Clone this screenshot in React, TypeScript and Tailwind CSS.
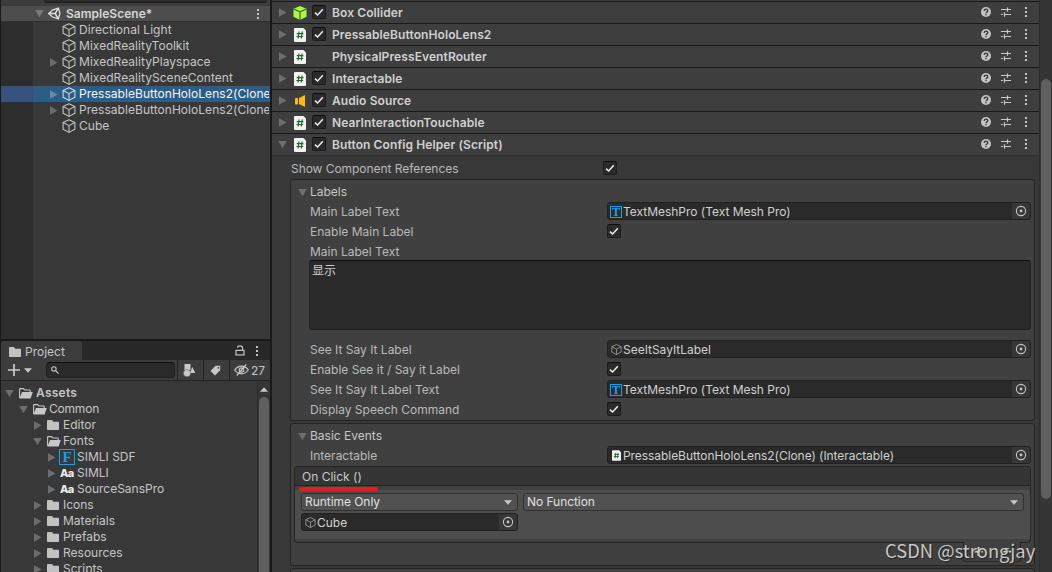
import React from "react";

const ui = "font-['Inter','Noto_Sans_CJK_SC',sans-serif]";

function Tri({ open = false, className = "" }: { open?: boolean; className?: string }) {
  return (
    <svg width="9" height="9" viewBox="0 0 9 9" className={`shrink-0 ${className}`}>
      <path d={open ? "M0.3 1h8.4L4.5 8.3z" : "M1 0.3v8.4L8.5 4.5z"} fill="currentColor" />
    </svg>
  );
}

function CubeIcon({ size = 14 }: { size?: number }) {
  return (
    <svg width={size} height={size} viewBox="0 0 14 14" className="shrink-0" fill="none" stroke="currentColor" strokeWidth="1.05" strokeLinejoin="round">
      <path d="M7 0.7L12.9 3.5V10.3L7 13.4L1.1 10.3V3.5Z" />
      <path d="M1.1 3.5L7 6.6L12.9 3.5M7 6.6V13.4" />
    </svg>
  );
}

function UnityIcon() {
  return (
    <svg width="13" height="13" viewBox="0 0 13 13" className="shrink-0" fill="none" stroke="#dedede" strokeWidth="1.3">
      <path d="M4.2 3.2L10.4 1.2L11.9 6.5L10.4 11.8L4.2 9.8L0.8 6.5Z" />
      <path d="M1.2 6.5H7.2M7.2 6.5L10.2 1.4M7.2 6.5L10.2 11.6" strokeWidth="1.5" />
    </svg>
  );
}

function Dots() {
  return (
    <svg width="3" height="11" viewBox="0 0 3 11" className="shrink-0" fill="#c4c4c4">
      <rect x="0" y="1" width="2" height="2" />
      <rect x="0" y="5" width="2" height="2" />
      <rect x="0" y="9" width="2" height="2" />
    </svg>
  );
}

function Script({ small = false }: { small?: boolean }) {
  return (
    <svg width={small ? 9 : 12} height={small ? 11 : 14} viewBox="0 0 12 14" className="shrink-0">
      <path d="M1 0H9.5L12 2.5V13a1 1 0 0 1-1 1H1a1 1 0 0 1-1-1V1a1 1 0 0 1 1-1z" fill="#f2f2f2" />
      <path d="M5 3.5L4.1 10.5M8.2 3.5L7.3 10.5M2.7 5.6H9.4M2.4 8.5H9.1" stroke="#22652c" strokeWidth="1.2" fill="none" />
    </svg>
  );
}

function BoxCollider() {
  return (
    <svg width="14" height="14" viewBox="0 0 14 14" className="shrink-0">
      <path d="M7 0L13.5 2.8V10.8L7 14L0.5 10.8V2.8Z" fill="#a9f54b" />
      <path d="M0.7 3L7 6L13.3 3M7 6V14" stroke="#385c16" strokeWidth="1.1" fill="none" />
    </svg>
  );
}

function Audio() {
  return (
    <svg width="12" height="14" viewBox="0 0 12 14" className="shrink-0" fill="#ffbb0c">
      <rect x="1" y="4" width="3" height="6.5" rx="0.8" />
      <path d="M5 4L11 1V13L5 10Z" />
    </svg>
  );
}

function Check() {
  return (
    <span className="flex h-[14px] w-[14px] shrink-0 items-center justify-center rounded-[2px] border border-[#1c1c1c] border-t-[#0d0d0d] bg-[#2a2a2a]">
      <svg width="10" height="9" viewBox="0 0 10 9" fill="none" stroke="#ececec" strokeWidth="1.5">
        <path d="M1 4.6L3.6 7L8.8 1.3" />
      </svg>
    </span>
  );
}

function Folder({ open = false }: { open?: boolean }) {
  return open ? (
    <svg width="14" height="11" viewBox="0 0 14 11" className="shrink-0">
      <path d="M0.6 10V1.2Q0.6 0.6 1.2 0.6H4.6L5.8 2H10.6Q11.2 2 11.2 2.7V4" fill="none" stroke="#c8c8c8" strokeWidth="1.1" />
      <path d="M3 4H13.8L11.6 10.5H0.5Z" fill="#c8c8c8" />
    </svg>
  ) : (
    <svg width="12" height="10" viewBox="0 0 12 10" className="shrink-0">
      <path d="M0.7 0H5L6.2 1.7H11.3Q12 1.7 12 2.4V9.3Q12 10 11.3 10H0.7Q0 10 0 9.3V0.7Q0 0 0.7 0Z" fill="#c2c2c2" />
    </svg>
  );
}

function Down() {
  return (
    <svg width="8" height="5" viewBox="0 0 8 5" className="shrink-0">
      <path d="M0 0.3H8L4 4.7Z" fill="#c8c8c8" />
    </svg>
  );
}

function Letter({ ch, small = false }: { ch: string; small?: boolean }) {
  return (
    <span
      className={
        small
          ? "flex h-[12px] w-[12px] shrink-0 items-center justify-center border border-[#12a2e6] font-['Liberation_Serif',serif] text-[12px] leading-none font-bold tracking-normal text-[#12a2e6]"
          : "flex h-4 w-4 shrink-0 items-center justify-center border border-[#12a2e6] font-['Liberation_Serif',serif] text-[15px] leading-none font-bold tracking-normal text-[#12a2e6]"
      }
    >
      {ch}
    </span>
  );
}

const hierarchy = [
  { name: "Directional Light" },
  { name: "MixedRealityToolkit" },
  { name: "MixedRealityPlayspace", arrow: true },
  { name: "MixedRealitySceneContent" },
  { name: "PressableButtonHoloLens2(Clone)", arrow: true, selected: true },
  { name: "PressableButtonHoloLens2(Clone)", arrow: true },
  { name: "Cube" },
];

function Hierarchy() {
  return (
    <section className="flex h-[339px] flex-col overflow-hidden bg-[#383838]">
      <div className="flex h-[6px] shrink-0 bg-[#3c3c3c] pr-[3px] pl-[43px]">
        <div className="h-[3px] flex-1 rounded-b-[3px] border-b border-[#1c1c1c] bg-[#2a2a2a]" />
      </div>
      <div className="flex h-4 shrink-0 items-center border-b border-[#303030] bg-[#4d4d4d] pr-[10px] pl-[34px]">
        <Tri open className="text-[#7c7c7c]" />
        <span className="ml-[4px] flex"><UnityIcon /></span>
        <span className="ml-[5px] text-[12px] font-semibold tracking-[0.02px] text-[#d6d6d6]">SampleScene*</span>
        <span className="ml-auto flex"><Dots /></span>
      </div>
      <div className="flex min-h-0 flex-1 flex-col bg-[linear-gradient(to_right,#2d2d2d_32px,#383838_32px)]">
        {hierarchy.map((row, i) => (
          <div
            key={i}
            className={`flex h-4 shrink-0 items-center overflow-hidden pr-px pl-12 ${row.selected ? "bg-[linear-gradient(to_right,#36517c_32px,#2c5d87_32px)] text-[#f4f4f4]" : "text-[#c6c6c6]"}`}
          >
            <span className="flex w-[13px] shrink-0">
              {row.arrow && <Tri className={row.selected ? "text-[#6b8aa4]" : "text-[#6e6e6e]"} />}
            </span>
            <span className={row.selected ? "flex text-[#d4dde5]" : "flex"}><CubeIcon /></span>
            <span className="ml-[3px] min-w-0 overflow-hidden tracking-[0.04px] whitespace-nowrap">{row.name}</span>
          </div>
        ))}
      </div>
    </section>
  );
}

type Node = { name: string; pad: string; kind: string; open?: boolean };
const tree: Node[] = [
  { name: "Assets", pad: "pl-[4px]", kind: "folder", open: true },
  { name: "Common", pad: "pl-[18px]", kind: "folder", open: true },
  { name: "Editor", pad: "pl-[32px]", kind: "folder" },
  { name: "Fonts", pad: "pl-[32px]", kind: "folder", open: true },
  { name: "SIMLI SDF", pad: "pl-[46px]", kind: "sdf" },
  { name: "SIMLI", pad: "pl-[46px]", kind: "font" },
  { name: "SourceSansPro", pad: "pl-[46px]", kind: "font" },
  { name: "Icons", pad: "pl-[32px]", kind: "folder" },
  { name: "Materials", pad: "pl-[32px]", kind: "folder" },
  { name: "Prefabs", pad: "pl-[32px]", kind: "folder" },
  { name: "Resources", pad: "pl-[32px]", kind: "folder" },
  { name: "Scripts", pad: "pl-[32px]", kind: "folder" },
];

function Project() {
  return (
    <section className="mt-[2px] flex min-h-0 flex-1 flex-col overflow-hidden">
      <div className="flex h-[19px] shrink-0 items-center bg-[#282828]">
        <div className="flex h-full w-[81px] items-center rounded-t-[2px] bg-[#3c3c3c] pt-[2px] pl-2">
          <Folder />
          <span className="ml-[4px]">Project</span>
        </div>
        <svg width="10" height="11" viewBox="0 0 10 11" className="ml-auto" fill="none" stroke="#c4c4c4" strokeWidth="1.2">
          <rect x="1" y="5.4" width="8" height="4.5" />
          <path d="M2.6 2.8Q2.6 0.8 5 0.8Q7.6 0.8 7.6 3.2V5" />
        </svg>
        <span className="mr-[11px] ml-[11px] flex"><Dots /></span>
      </div>
      <div className="flex h-[21px] shrink-0 items-center border-b border-[#232323] bg-[#3c3c3c] pl-[7px]">
        <svg width="12" height="12" viewBox="0 0 12 12" stroke="#cccccc" strokeWidth="1.7">
          <path d="M6 0V12M0 6H12" />
        </svg>
        <span className="ml-[4px] flex"><Down /></span>
        <div className="ml-[14px] flex h-4 w-[129px] items-center rounded-[4px] border border-[#202020] border-t-[#0d0d0d] bg-[#2a2a2a] pl-[4px]">
          <svg width="8" height="8" viewBox="0 0 8 8" fill="none" stroke="#c4c4c4" strokeWidth="1.1">
            <circle cx="2.9" cy="2.9" r="2.2" />
            <path d="M4.5 4.5L7.6 7.6" />
          </svg>
        </div>
        <div className="ml-[2px] flex h-full w-[26px] items-center border-l border-[#232323] pl-[5px]">
          <svg width="13" height="13" viewBox="0 0 13 13" fill="#c8c8c8">
            <rect x="1.5" y="0" width="6" height="6" />
            <path d="M9.3 3L12.3 9H6.8Z" />
            <circle cx="4" cy="9.2" r="3.6" stroke="#3c3c3c" strokeWidth="0.4" />
          </svg>
        </div>
        <div className="flex h-full w-[26px] items-center border-l border-[#232323] pl-[6px]">
          <svg width="11" height="11" viewBox="0 0 11 11">
            <path d="M5.6 0.8H10.2V5.2L5 10.5L0.5 6Z" fill="#c8c8c8" />
            <circle cx="8.3" cy="2.8" r="0.9" fill="#3c3c3c" />
          </svg>
        </div>
        <div className="flex h-full flex-1 items-center border-l border-[#232323] pl-[4px]">
          <svg width="15" height="12" viewBox="0 0 15 12" fill="none" stroke="#c8c8c8" strokeWidth="1.2">
            <path d="M0.7 6Q3.5 2.2 7.5 2.2Q11.5 2.2 14.3 6Q11.5 9.8 7.5 9.8Q3.5 9.8 0.7 6Z" />
            <circle cx="7.5" cy="6" r="2.2" />
            <path d="M2.8 11.5L12.2 0.5" />
          </svg>
          <span className="ml-[2px] pt-px tracking-[-0.1px]">27</span>
        </div>
      </div>
      <div className="flex min-h-0 flex-1">
        <div className="flex min-w-0 flex-1 flex-col overflow-hidden bg-[#383838] pt-1">
          {tree.map((n) => (
            <div key={n.name} className={`flex h-4 shrink-0 items-center ${n.pad}`}>
              <Tri open={n.open} className="text-[#6e6e6e]" />
              {n.kind === "folder" && (
                <span className={n.name === "Assets" ? "ml-[5px] flex w-[17px]" : "ml-[5px] flex w-[16px]"}><Folder open={n.open} /></span>
              )}
              {n.kind === "sdf" && <span className="mr-[2px] ml-[3px] flex"><Letter ch="F" /></span>}
              {n.kind === "font" && (
                <span className="ml-[4px] w-[17px] text-[11px] font-extrabold tracking-[-0.7px] text-[#ececec]">Aa</span>
              )}
              <span className={n.name === "Assets" ? "font-semibold tracking-[0.25px]" : n.name === "Common" ? "tracking-[-0.2px]" : ""}>{n.name}</span>
            </div>
          ))}
        </div>
        <div className="flex w-[13px] flex-col items-center overflow-hidden border-l border-[#2c2c2c] bg-[#353535]">
          <svg width="8" height="5" viewBox="0 0 8 5" className="mt-[6px] shrink-0"><path d="M0 4.7H8L4 0.3Z" fill="#c8c8c8" /></svg>
          <div className="mt-[5px] w-[10px] flex-1 rounded-t-[5px] bg-[#5f5f5f]" />
        </div>
      </div>
    </section>
  );
}

const components = [
  { name: "Box Collider", icon: "box", check: true },
  { name: "PressableButtonHoloLens2", icon: "script", check: true },
  { name: "PhysicalPressEventRouter", icon: "script", check: false },
  { name: "Interactable", icon: "script", check: true },
  { name: "Audio Source", icon: "audio", check: true },
  { name: "NearInteractionTouchable", icon: "script", check: true },
  { name: "Button Config Helper (Script)", icon: "script", check: true, open: true },
];

function ComponentHeader({ c }: { c: (typeof components)[number] }) {
  return (
    <div className="flex h-[22px] shrink-0 items-center border-t border-[#1a1a1a] bg-[#3e3e3e] pr-[11px] pl-[6px]">
      <Tri open={c.open} className="text-[#6e6e6e]" />
      <span className="ml-[5px] flex w-[20px] justify-center pr-[5px]">
        {c.icon === "box" && <BoxCollider />}
        {c.icon === "script" && <Script />}
        {c.icon === "audio" && <Audio />}
      </span>
      <span className="flex w-[20px] pb-px">{c.check && <Check />}</span>
      <span className="text-[12px] font-semibold tracking-[0.1px] text-[#d0d0d0]">{c.name}</span>
      <span className="ml-auto flex items-end pb-[2px]">
        <svg width="10" height="10" viewBox="0 0 10 10">
          <circle cx="5" cy="5" r="5" fill="#c4c4c4" />
          <path d="M3.2 3.9Q3.2 2.2 5 2.2Q6.8 2.2 6.8 3.7Q6.8 4.6 5.6 5.1Q5 5.4 5 6.2M5 7.1V8.3" fill="none" stroke="#343434" strokeWidth="1.3" />
        </svg>
        <svg width="11" height="11" viewBox="0 0 11 11" className="ml-[10px]" stroke="#c8c8c8" strokeWidth="1.2" fill="none">
          <path d="M0 3.5H6M6.5 1.5V5.7M7 3.5H10M0 8.5H2M3.5 6.3V10.7M4 8.5H10" />
        </svg>
        <span className="ml-[13px] flex"><Dots /></span>
      </span>
    </div>
  );
}

function ObjectField({ children, className = "" }: { children: React.ReactNode; className?: string }) {
  return (
    <div className={`flex h-[18px] items-center overflow-hidden rounded-[3px] border border-[#212121] bg-[#2a2a2a] tracking-[-0.02px] text-[#d0d0d0] ${className}`}>
      <span className="flex min-w-0 flex-1 items-center pt-px pl-[2px] whitespace-nowrap">{children}</span>
      <span className="flex h-full w-[18px] items-center bg-[#373737] pl-[3px]">
        <svg width="12" height="12" viewBox="0 0 12 12">
          <circle cx="6" cy="6" r="4.6" fill="none" stroke="#c4c4c4" strokeWidth="1.1" />
          <circle cx="6" cy="6" r="1.4" fill="#c4c4c4" />
        </svg>
      </span>
    </div>
  );
}

function Row({ label, children }: { label: string; children?: React.ReactNode }) {
  return (
    <div className="flex h-5 shrink-0 items-center pr-[3px] pl-[19px] text-[#b9b9b9]">
      <span className="w-[297px] shrink-0">{label}</span>
      <div className="flex h-5 min-w-0 flex-1 items-center pb-[2px]">{children}</div>
    </div>
  );
}

function Foldout({ title }: { title: string }) {
  return (
    <div className="flex h-5 shrink-0 items-center pl-[7px]">
      <Tri open className="text-[#6e6e6e]" />
      <span className="ml-[3px] text-[#c6c6c6]">{title}</span>
    </div>
  );
}

function Dropdown({ text, className }: { text: string; className: string }) {
  return (
    <div className={`flex h-[18px] items-center justify-between rounded-[3px] border border-[#303030] bg-[#515151] pr-[5px] pl-[3px] tracking-[-0.05px] text-[#e0e0e0] ${className}`}>
      <span>{text}</span>
      <Down />
    </div>
  );
}

function Inspector() {
  return (
    <main className="flex min-w-0 flex-1 flex-col overflow-hidden bg-[#383838]">
      <div className="h-px shrink-0 bg-[#3e3e3e]" />
      {components.map((c) => (
        <ComponentHeader key={c.name} c={c} />
      ))}
      <div className="flex flex-col border-t border-[#303030] pr-[4px] pl-[18px]">
        <div className="flex h-[23px] shrink-0 items-center pt-[2px] pl-px text-[#b9b9b9]">
          <span className="w-[312px] tracking-[-0.05px]">Show Component References</span>
          <span className="flex pb-px"><Check /></span>
        </div>
        <div className="flex h-[242px] shrink-0 flex-col rounded-[3px] border border-[#242424] bg-[#404040] pt-[2px]">
          <Foldout title="Labels" />
          <Row label="Main Label Text">
            <ObjectField className="flex-1"><Letter ch="T" small /><span className="ml-px">TextMeshPro (Text Mesh Pro)</span></ObjectField>
          </Row>
          <Row label="Enable Main Label"><Check /></Row>
          <Row label="Main Label Text" />
          <div className="-mt-[2px] mr-[3px] mb-[10px] ml-[18px] h-[70px] shrink-0 rounded-[3px] border border-[#212121] border-t-[#0d0d0d] bg-[#2a2a2a] pt-px pl-[2px] leading-[18px] text-[#d0d0d0]">
            显示
          </div>
          <Row label="See It Say It Label">
            <ObjectField className="flex-1"><span className="mx-px flex text-[#a0a0a0]"><CubeIcon size={11} /></span>SeeItSayItLabel</ObjectField>
          </Row>
          <Row label="Enable See it / Say it Label"><Check /></Row>
          <Row label="See It Say It Label Text">
            <ObjectField className="flex-1"><Letter ch="T" small /><span className="ml-px">TextMeshPro (Text Mesh Pro)</span></ObjectField>
          </Row>
          <Row label="Display Speech Command"><Check /></Row>
        </div>
        <div className="mt-[2px] flex h-[143px] shrink-0 flex-col rounded-[3px] border border-[#242424] bg-[#404040] pt-[2px]">
          <Foldout title="Basic Events" />
          <Row label="Interactable">
            <ObjectField className="flex-1"><span className="mr-[2px] ml-[2px] flex"><Script small /></span><span className="tracking-[-0.06px]">PressableButtonHoloLens2(Clone) (Interactable)</span></ObjectField>
          </Row>
          <div className="mr-[3px] ml-[3px] flex h-[77px] shrink-0 flex-col rounded-[3px] border border-[#242424] bg-[#404040]">
            <div className="flex h-[19px] shrink-0 items-center border-b border-[#242424] bg-[#353535] pt-px pl-[7px] text-[#c8c8c8]">On Click ()</div>
            <div className="relative mt-1 h-[49px] bg-[#4d4d4d] pt-[3px] pr-[6px] pl-[6px]">
              <div className="absolute top-[-3px] left-[4px] h-[4px] w-[79px] rounded-full bg-[#e91c1c]" />
              <div className="flex gap-[5px]">
                <Dropdown text="Runtime Only" className="w-[217px]" />
                <Dropdown text="No Function" className="flex-1" />
              </div>
              <ObjectField className="mt-[2px] w-[217px]"><span className="mx-px flex text-[#a0a0a0]"><CubeIcon size={11} /></span>Cube</ObjectField>
            </div>
          </div>
          <div className="mr-[13px] -mt-px flex h-[20px] w-[58px] items-center justify-around self-end rounded-b-[3px] border border-t-0 border-[#2a2a2a] bg-[#404040]">
            <svg width="9" height="9" viewBox="0 0 9 9" stroke="#d8d8d8" strokeWidth="1.8"><path d="M4.5 0V9M0 4.5H9" /></svg>
            <svg width="9" height="9" viewBox="0 0 9 9" stroke="#d8d8d8" strokeWidth="1.8"><path d="M0 4.5H9" /></svg>
          </div>
        </div>
        <div className="mt-[2px] h-[20px] shrink-0 rounded-[3px] border border-[#242424] bg-[#404040]" />
      </div>
    </main>
  );
}

export default function App() {
  return (
    <div className={`relative flex h-[572px] w-[1052px] overflow-hidden bg-[#191919] text-[12px] leading-4 tracking-normal text-[#c6c6c6] ${ui}`}>
      <div className="ml-px flex w-[269px] shrink-0 flex-col">
        <Hierarchy />
        <Project />
      </div>
      <div className="ml-[2px] flex min-w-0 flex-1">
        <Inspector />
        <div className="flex w-[13px] shrink-0 flex-col items-end border-l border-[#2c2c2c] bg-[#353535] pt-[79px] pr-px">
          <div className="h-[420px] w-[10px] rounded-[5px] bg-[#5f5f5f]" />
        </div>
      </div>
      <div className="absolute top-[537px] left-[885px] font-['Noto_Sans_CJK_SC',sans-serif] text-[18.4px] leading-[26px] tracking-normal whitespace-nowrap text-[#c8c8c8] [text-shadow:1px_1px_1px_#222]">
        CSDN @strongjay
      </div>
    </div>
  );
}
